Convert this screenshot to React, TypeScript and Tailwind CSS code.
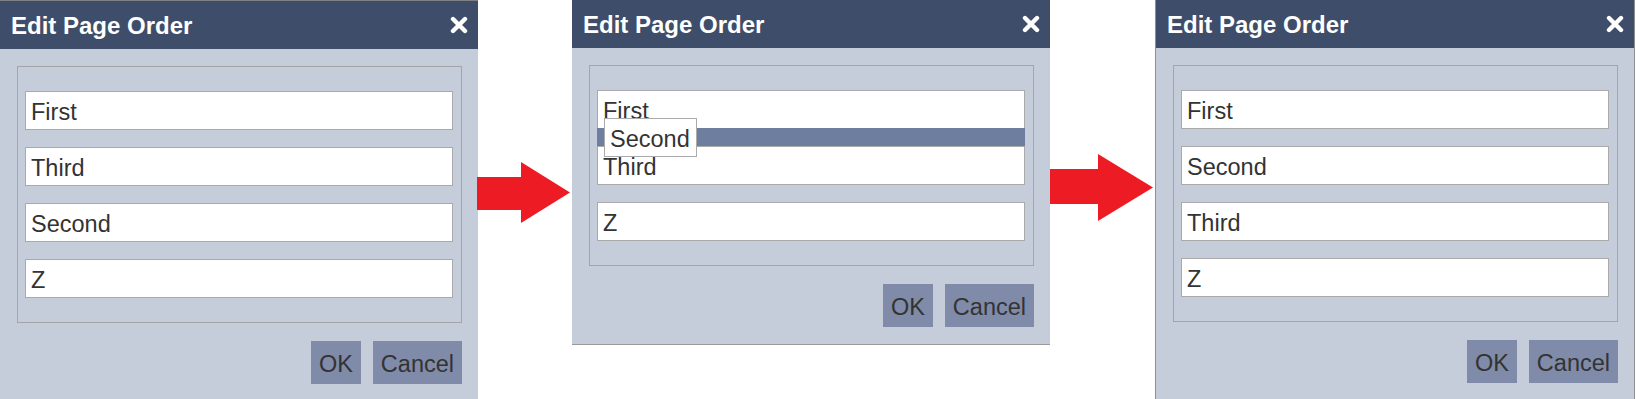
import React from "react";

const font = "font-['Liberation_Sans',Arial,sans-serif]";

const rowCls =
  "flex h-[39px] shrink-0 items-center border border-[#aaaaaa] bg-white pl-[5px] pt-[3px] text-[23.5px] leading-[normal] text-[#333]";

function CloseIcon() {
  return (
    <svg width="18" height="18" viewBox="0 0 18 18" className="shrink-0 self-center" aria-hidden>
      <path d="M3 3 L15 15 M15 3 L3 15" stroke="#fff" strokeWidth="4.4" strokeLinecap="round" />
    </svg>
  );
}

function Header() {
  return (
    <div className="flex h-[48px] shrink-0 justify-between bg-[#3e4d69] pl-[11px] pr-[10px]">
      <span className="self-start pt-[11px] text-[24px] font-bold leading-[normal] text-white">
        Edit Page Order
      </span>
      <CloseIcon />
    </div>
  );
}

function Buttons() {
  return (
    <div className="ml-[17px] mr-[16px] mt-[18px] flex justify-end gap-[12px]">
      {["OK", "Cancel"].map((b) => (
        <button
          key={b}
          className="flex h-[43px] items-center bg-[#7f8ba8] px-[8px] pt-[3px] text-[23.5px] leading-[normal] text-[#333]"
        >
          {b}
        </button>
      ))}
    </div>
  );
}

function List({ items }: { items: string[] }) {
  return (
    <div className="ml-[17px] mr-[16px] mt-[17px] flex flex-col gap-[17px] border border-[#a5a5a5] pb-[24px] pl-[7px] pr-[8px] pt-[24px]">
      {items.map((t) => (
        <div key={t} className={rowCls}>
          {t}
        </div>
      ))}
    </div>
  );
}

function Arrow({ w, h, shaft, head }: { w: number; h: number; shaft: [number, number]; head: number }) {
  const pts = `0,${shaft[0]} ${head},${shaft[0]} ${head},0 ${w},${h / 2} ${head},${h} ${head},${shaft[1]} 0,${shaft[1]}`;
  return (
    <svg width={w} height={h} viewBox={`0 0 ${w} ${h}`} className="block shrink-0" aria-hidden>
      <polygon points={pts} fill="#ed1c24" />
    </svg>
  );
}

export default function App() {
  return (
    <div className={`flex h-[399px] w-[1636px] overflow-hidden bg-white ${font}`}>
      {/* before: dropped out of order */}
      <div className="flex h-[399px] w-[478px] shrink-0 flex-col border-t border-[#808080] bg-[#c5cdda]">
        <Header />
        <List items={["First", "Third", "Second", "Z"]} />
        <Buttons />
      </div>

      <div className="w-[94px] shrink-0">
        <div className="-ml-px mt-[162px]">
          <Arrow w={93} h={61} shaft={[15, 48]} head={44} />
        </div>
      </div>

      {/* while dragging */}
      <div className="relative flex h-[345px] w-[478px] shrink-0 flex-col border-b border-[#9a9a9a] bg-[#c5cdda]">
        <Header />
        <div className="ml-[17px] mr-[16px] mt-[17px] flex flex-col border border-[#a5a5a5] pb-[24px] pl-[7px] pr-[8px] pt-[24px]">
          <div className={rowCls}>First</div>
          <div className="-mt-px h-[18px] shrink-0 bg-[#6e7e9e]" />
          <div className={rowCls}>Third</div>
          <div className={`${rowCls} mt-[17px]`}>Z</div>
        </div>
        <Buttons />
        <div className="absolute left-[32px] top-[118px] flex h-[39px] w-[93px] items-center border border-[#aaaaaa] bg-white pl-[5px] pt-[3px] text-[23.5px] leading-[normal] text-[#333]">
          Second
        </div>
      </div>

      <div className="w-[105px] shrink-0">
        <div className="-ml-[2px] mt-[154px]">
          <Arrow w={105} h={67} shaft={[15, 50]} head={50} />
        </div>
      </div>

      {/* after drop */}
      <div className="flex h-[399px] w-[480px] shrink-0 flex-col border-x border-[#8f8f8f] bg-[#c5cdda]">
        <Header />
        <List items={["First", "Second", "Third", "Z"]} />
        <Buttons />
      </div>
    </div>
  );
}
